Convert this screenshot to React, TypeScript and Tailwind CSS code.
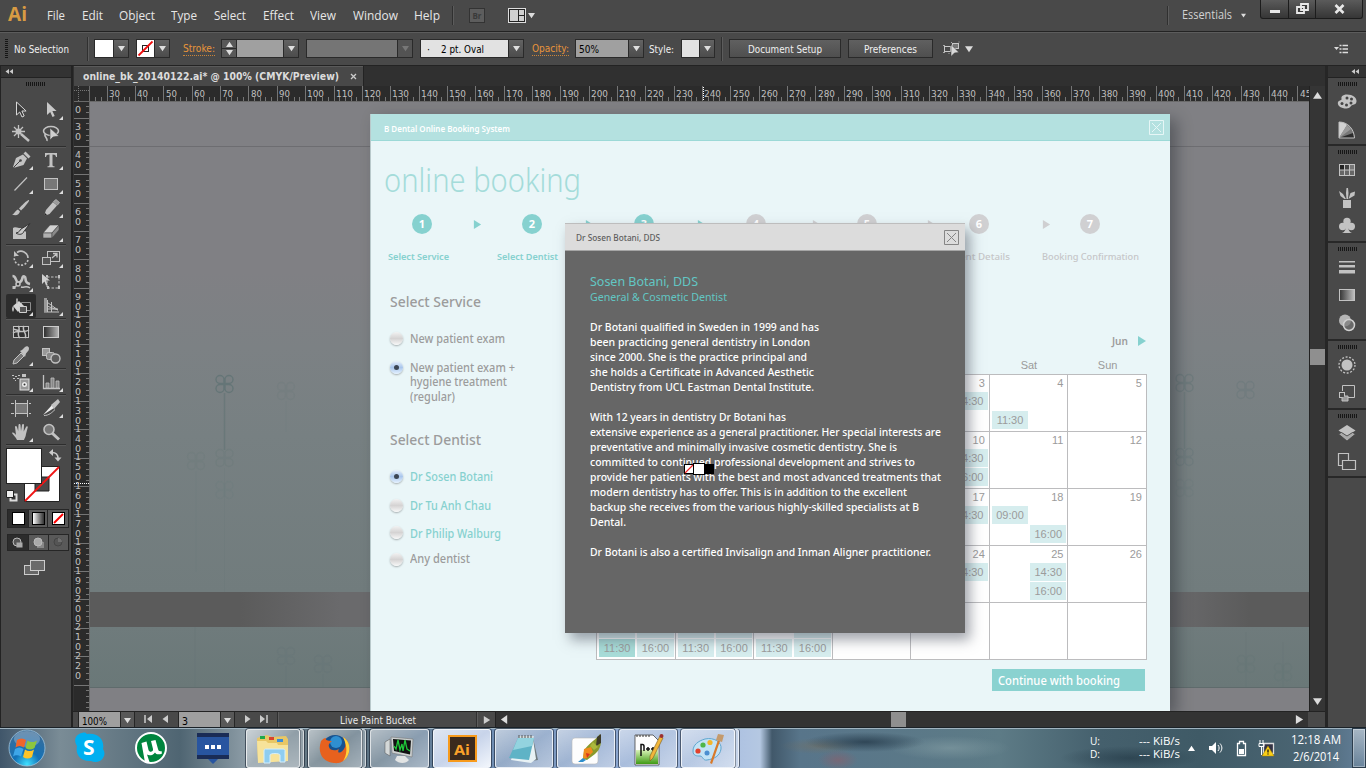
import React, { useLayoutEffect, useRef, useState } from "react";

const UI = "font-['Open_Sans','Noto_Sans',sans-serif]";
const TAHOMA = "font-['DejaVu_Sans','Noto_Sans',sans-serif]";
const MYRIAD = "font-['Noto_Sans','Open_Sans',sans-serif]";

/* One line of text condensed or widened to an exact measure. */
function Fit({ w, className = "", children }: { w: number; className?: string; children: React.ReactNode }) {
  const ref = useRef<HTMLSpanElement>(null);
  const [k, setK] = useState(1);
  useLayoutEffect(() => {
    if (ref.current) {
      ref.current.style.transform = "none";
      setK(w / ref.current.getBoundingClientRect().width);
    }
  }, [w]);
  return (
    <span className={`block shrink-0 whitespace-nowrap ${className}`} style={{ width: w }}>
      <span ref={ref} className="inline-block origin-left" style={{ transform: `scaleX(${k})` }}>
        {children}
      </span>
    </span>
  );
}

function Tri({ dir = "down", s = 7, fill = "#dcdcdc", className = "" }: { dir?: string; s?: number; fill?: string; className?: string }) {
  const pts: Record<string, string> = {
    down: "0,1.5 10,1.5 5,9",
    up: "0,8.5 10,8.5 5,1",
    right: "1,0 9,5 1,10",
    left: "8,0 1,5 8,10",
  };
  return (
    <svg width={s} height={s} viewBox="0 0 10 10" className={`shrink-0 ${className}`}>
      <polygon points={pts[dir]} fill={fill} />
    </svg>
  );
}

function Grip({ className = "" }: { className?: string }) {
  return <div className={`h-[4px] w-[19px] shrink-0 bg-[repeating-linear-gradient(90deg,#161616_0_1px,#494949_1px_2px)] ${className}`} />;
}

function Drop({ className = "", dim = false }: { className?: string; dim?: boolean }) {
  return (
    <div className={`flex h-[19px] w-[16px] shrink-0 items-center justify-center border border-[#2a2a2a] ${dim ? "bg-[#535353]" : "bg-gradient-to-b from-[#636363] to-[#4c4c4c]"} ${className}`}>
      <Tri s={7} fill={dim ? "#777" : "#dedede"} />
    </div>
  );
}

function Sep({ className = "" }: { className?: string }) {
  return <div className={`w-[2px] shrink-0 border-l border-[#303030] bg-[#5c5c5c] ${className}`} />;
}

/* ---------------------------------------------------------------- menu bar */

const menus: [string, string, number][] = [
  ["File", "ml-[20px]", 18],
  ["Edit", "ml-[17px]", 21],
  ["Object", "ml-[16px]", 36],
  ["Type", "ml-[16px]", 26],
  ["Select", "ml-[17px]", 32],
  ["Effect", "ml-[17px]", 31],
  ["View", "ml-[16px]", 26],
  ["Window", "ml-[17px]", 45],
  ["Help", "ml-[16px]", 26],
];

function MenuBar() {
  return (
    <div className={`flex h-[31px] shrink-0 items-center bg-[#494949] text-[12px] leading-[18px] text-[#e6e6e6] ${UI}`}>
      <Fit w={19} className="ml-[8px] pb-[4px] text-[20px] leading-[28px] font-bold text-[#d89b43]">Ai</Fit>
      {menus.map(([t, m, w]) => (
        <Fit key={t} w={w} className={m}>{t}</Fit>
      ))}
      <Sep className="ml-[12px] h-[19px]" />
      <div className="ml-[15px] flex h-[15px] w-[16px] items-center justify-center border border-[#333] bg-[#5d5d5d] text-[8px] font-bold text-[#3a3a3a]">Br</div>
      <svg width="18" height="16" className="ml-[23px] shrink-0">
        <rect x="0.5" y="0.5" width="17" height="14" fill="#222" stroke="#ddd" />
        <rect x="2" y="2" width="8" height="11" fill="#cfcfcf" />
        <rect x="11" y="2" width="5" height="5" fill="#cfcfcf" />
        <rect x="11" y="8" width="5" height="5" fill="#cfcfcf" />
      </svg>
      <Tri className="ml-[2px]" s={7} />
      <Sep className="ml-[632px] h-[19px]" />
      <Fit w={50} className="ml-[13px] pb-[1px] text-[#d2d2d2]">Essentials</Fit>
      <Tri className="ml-[9px]" s={5} />
      <div className="ml-[14px] flex h-[19px] w-[103px] shrink-0 self-start rounded-b-[3px] border border-t-0 border-[#1c1c1c] bg-gradient-to-b from-[#5b5b5b] to-[#363636]">
        <div className="flex w-[28px] items-center justify-center border-r border-[#1c1c1c] pt-[5px]">
          <div className="h-[3px] w-[10px] bg-[#e8e8e8]" />
        </div>
        <div className="flex w-[27px] items-center justify-center border-r border-[#1c1c1c]">
          <svg width="13" height="12">
            <path d="M5 1h7v6H5z M1 4h7v6H1z" fill="#3a3a3a" stroke="#e8e8e8" strokeWidth="1.8" />
          </svg>
        </div>
        <div className="flex flex-1 items-center justify-center">
          <svg width="11" height="10">
            <path d="M1.500 1l8 8M9.500 1l-8 8" stroke="#e8e8e8" strokeWidth="2.600" />
          </svg>
        </div>
      </div>
    </div>
  );
}

/* ------------------------------------------------------------- control bar */

function ControlBar() {
  return (
    <div className={`flex h-[35px] shrink-0 items-center border-t border-b border-[#232323] bg-[#494949] text-[10.500px] leading-[14px] text-[#f0f0f0] shadow-[inset_0_1px_0_#5c5c5c] ${TAHOMA}`}>
      <div className="ml-[5px] h-[20px] w-[3px] bg-[repeating-linear-gradient(180deg,#161616_0_1px,#494949_1px_2px)]" />
      <Fit w={55} className="ml-[6px]">No Selection</Fit>
      <Sep className="ml-[18px] h-[24px]" />
      <div className="ml-[5px] h-[19px] w-[20px] border border-[#2a2a2a] bg-white" />
      <Drop className="-ml-[1px]" />
      <svg width="19" height="19" className="ml-[7px] shrink-0">
        <rect x="0.5" y="0.5" width="18" height="18" fill="#fff" stroke="#2a2a2a" />
        <rect x="6.500" y="6.500" width="6" height="6" fill="none" stroke="#222" />
        <path d="M2.500 16.500l14-14" stroke="#f00f0f" strokeWidth="1.8" />
      </svg>
      <Drop className="-ml-[1px]" />
      <Fit w={32} className="ml-[13px] border-b border-dotted border-[#c98438] text-[#e8953b]">Stroke:</Fit>
      <div className="ml-[6px] flex h-[19px] w-[16px] shrink-0 flex-col items-center justify-between border border-[#2a2a2a] bg-[#585858] py-[1px]">
        <Tri dir="up" s={7} />
        <div className="h-px w-full bg-[#2a2a2a]" />
        <Tri s={7} />
      </div>
      <div className="-ml-[1px] h-[19px] w-[48px] border border-[#2a2a2a] bg-[#a0a0a0]" />
      <Drop className="-ml-[1px]" />
      <div className="ml-[7px] h-[19px] w-[92px] border border-[#2a2a2a] bg-[#757575]" />
      <Drop dim className="-ml-[1px]" />
      <div className="ml-[7px] flex h-[19px] w-[89px] items-center border border-[#2a2a2a] bg-[#e2e2e2] text-black">
        <Fit w={3} className="ml-[6px]">·</Fit>
        <Fit w={43} className="ml-[11px]">2 pt. Oval</Fit>
      </div>
      <Drop className="-ml-[1px]" />
      <Fit w={37} className="ml-[8px] border-b border-dotted border-[#c98438] text-[#e8953b]">Opacity:</Fit>
      <div className="ml-[6px] flex h-[19px] w-[54px] items-center border border-[#2a2a2a] bg-[#a0a0a0] text-black">
        <Fit w={20} className="ml-[3px]">50%</Fit>
      </div>
      <Drop className="-ml-[1px]" />
      <Fit w={25} className="ml-[5px]">Style:</Fit>
      <div className="ml-[7px] h-[19px] w-[19px] border border-[#2a2a2a] bg-[#e2e2e2]" />
      <Drop className="-ml-[1px]" />
      <Sep className="ml-[6px] h-[24px]" />
      <div className="ml-[6px] flex h-[19px] w-[112px] items-center justify-center border border-[#2a2a2a] bg-gradient-to-b from-[#606060] to-[#4f4f4f]">
        <Fit w={74}>Document Setup</Fit>
      </div>
      <div className="ml-[7px] flex h-[19px] w-[85px] items-center justify-center border border-[#2a2a2a] bg-gradient-to-b from-[#606060] to-[#4f4f4f]">
        <Fit w={53}>Preferences</Fit>
      </div>
      <svg width="18" height="16" className="ml-[10px] shrink-0">
        <rect x="1.500" y="5.500" width="6" height="5" fill="none" stroke="#c8c8c8" />
        <rect x="9.500" y="2.500" width="6" height="5" fill="#777" stroke="#c8c8c8" />
        <path d="M0 4.500h2M0 11.500h2M6 12v1M15.500 1h1M8 1.500h1" stroke="#aaa" />
        <path d="M8 3.500l8 8-4.500.4-3.500 3.600z" fill="#d8d8d8" stroke="#333" strokeWidth=".5" />
      </svg>
      <Tri className="ml-[4px]" s={8} />
      <svg width="14" height="10" className="ml-[361px] shrink-0">
        <polygon points="0,3 5,3 2.500,6" fill="#ddd" />
        <path d="M5.500 1.500h2M5.500 5h2M5.500 8.500h2M8.500 1.500h5.500M8.500 5h5.500M8.500 8.500h5.500" stroke="#ddd" strokeWidth="1.300" />
      </svg>
    </div>
  );
}

/* ------------------------------------------------------------------- tools */

const G = "#c2c2c2";
const tools: Record<string, React.ReactNode> = {
  select: <path d="M7.500 4v13l3.200-3 2.300 5 2.200-1-2.300-5h4.200z" fill="#3a3a3a" stroke="#d8d8d8" />,
  direct: <path d="M8 4v13l3.200-3 2.300 5 2.200-1-2.300-5h4.200z" fill="#c8c8c8" />,
  wand: (
    <g stroke={G} fill="none">
      <path d="M12 12l8 7" strokeWidth="2.400" />
      <path d="M9.500 3v13M3 9.500h13M5 5l9 9M14 5l-9 9" strokeWidth="1.300" />
      <circle cx="9.500" cy="9.500" r="3" fill={G} stroke="none" />
    </g>
  ),
  lasso: (
    <g fill="none" stroke={G} strokeWidth="1.600">
      <ellipse cx="12" cy="9" rx="7.500" ry="4.500" />
      <path d="M6 12c-1 3 3 4 2 7" />
      <path d="M11 6v12l3-3 6-1z" fill="#cfcfcf" stroke="#444" strokeWidth=".6" />
    </g>
  ),
  pen: (
    <g fill={G}>
      <path d="M4 19l3-9 7-3.500 4 4L14.500 17 6 19.500z" />
      <path d="M14.500 5.500l2-2 5 5-2 2z" />
      <path d="M5 19l6-6" stroke="#444" />
      <circle cx="11.500" cy="12.500" r="1.300" fill="#444" />
    </g>
  ),
  type: <path d="M6 5h12v4h-1c-.4-1.800-1-2.500-3.500-2.500V17c0 1 .5 1.300 2 1.300v.9h-7v-.9c1.500 0 2-.3 2-1.300V6.500C8 6.500 7.400 7.200 7 9H6z" fill={G} />,
  line: <path d="M5.500 18.500l12.500-13" stroke={G} strokeWidth="1.200" />,
  rect: <rect x="5.500" y="6.500" width="13" height="11" fill="#777" stroke={G} />,
  brush: (
    <g fill={G}>
      <path d="M20 4c1 .8-5 8-8 10.500L10 12.500C13 9 19 3.200 20 4z" />
      <path d="M9 13.500l2 2C10 19 7 20 3 18.500c2.500-.5 3-4 6-5z" />
    </g>
  ),
  pencil: (
    <g>
      <path d="M5 20l2-6L14 6l4 3.500-7.500 8.500z" fill={G} />
      <path d="M14.500 5.500L17 3.500l3.500 3L18.500 9z" fill="#999" stroke={G} strokeWidth=".7" />
      <path d="M5 20l1-3 2 2z" fill="#222" />
    </g>
  ),
  blob: (
    <g>
      <path d="M4 8c2-1.500 4 0 6 0h3l4 4v7H4z" fill={G} />
      <path d="M21 3.500L12 9c-1.500 3-4 4-5 4 3.500 2.500 7 1 7.500-1z" fill="#ccc" stroke="#333" strokeWidth="1" />
    </g>
  ),
  eraser: (
    <g stroke="#444" strokeWidth=".6">
      <path d="M4 13l7-8 9 0-7 8z" fill="#d2d2d2" />
      <path d="M4 13h9v5H4z" fill="#b0b0b0" />
      <path d="M13 13l7-8v5l-7 8z" fill="#8a8a8a" />
    </g>
  ),
  rotate: (
    <g fill="none" stroke={G} strokeWidth="1.600">
      <path d="M8 6.500A7 7 0 0 1 19 12" />
      <path d="M19 14a7 7 0 1 1-13-5" strokeDasharray="2 1.600" />
      <path d="M5 5v5h5z" fill={G} stroke="none" />
    </g>
  ),
  scale: (
    <g fill="none" stroke={G}>
      <rect x="8.500" y="5.500" width="12" height="10" />
      <rect x="3.500" y="11.500" width="8" height="7" fill="#555" />
      <path d="M13 12l4.500-4M14 7.500h4v4" strokeWidth="1.300" />
    </g>
  ),
  warp: (
    <g fill="none" stroke={G} strokeWidth="1.500">
      <path d="M3.500 6c4 0 2.500 5 5.500 6.500 3 .5 4-2 4.500-5 .8-2 3-1 3 1 0 3 1.500 5 4.500 5.500" strokeWidth="2.600" />
      <path d="M5 18l4-4 5-6" strokeWidth="1.200" />
      <circle cx="9" cy="14" r="2" fill="#444" />
      <path d="M3.500 16h3v3h-3z" fill={G} stroke="none" />
      <path d="M12 17c3 1 5-2 9 1" />
    </g>
  ),
  freexf: (
    <g>
      <path d="M8 7h12v11H8z" fill="none" stroke={G} strokeDasharray="2.500 1.500" />
      <path d="M7 5h2v2H7zM19 5h2v3h-2zM19 16h2v3h-2zM8 16h2v3H8z" fill={G} />
      <path d="M3 4v10l2.500-2.500 1.500 4 1.500-1-1.500-4h4z" fill="#cfcfcf" />
    </g>
  ),
  bucket: (
    <g>
      <path d="M12.500 8.500h9v8h-9z" fill="none" stroke="#8d8d8d" />
      <path d="M4 12l6-5 5 5-6 6z" fill="#d4d4d4" />
      <path d="M8 10V4.500" stroke={G} strokeWidth="1.500" />
      <path d="M4 12c-1 2-1 4 0 6 1-2 1-4 0-6z" fill="#eee" />
      <path d="M10.500 12.500h7v6h-7z" fill="#555" stroke="#d0d0d0" />
    </g>
  ),
  persp: (
    <g stroke={G} fill="none">
      <path d="M5.500 4v14M8.500 6v12M12.500 8v10M5 6l14 10M5 11l14 5M5 18h15M9 15h10" />
      <path d="M5 4h3v14H5z" fill="#999" stroke="none" />
    </g>
  ),
  mesh: (
    <g stroke={G} fill="none">
      <rect x="4.500" y="6.500" width="15" height="11" fill="#333" />
      <path d="M4 13c5-4 10 1 16-3M9 6c4 3-3 8 2 12M15 6c-3 4 4 8 1 12M4 9l7 2" strokeWidth="1.500" />
    </g>
  ),
  gradient: <rect x="4.500" y="6.500" width="15" height="11" fill="url(#lr)" stroke="#ccc" />,
  dropper: (
    <g>
      <path d="M4 20l1-4 7-7 3 3-7 7z" fill="#777" stroke={G} />
      <path d="M11 7l2-1 3-3c3-2 5 1 3.500 3.500L17 9.500 16 13z" fill={G} />
    </g>
  ),
  blend: (
    <g stroke={G}>
      <rect x="3.500" y="4.500" width="7" height="7" fill="#999" />
      <rect x="7.500" y="8.500" width="8" height="7" rx="2" fill="#888" />
      <circle cx="16.500" cy="14.500" r="4.500" fill="#5c5c5c" strokeWidth="1.400" />
    </g>
  ),
  spray: (
    <g>
      <path d="M3 5h2v1H3zM6 6h2v1H6zM9 5h2v1H9zM4 8h2v1H4zM8 8h2v1H8zM6 10h1v1H6z" fill={G} />
      <path d="M13 4h4v3h-4z" fill={G} />
      <rect x="11" y="9" width="9" height="11" fill="#999" stroke="#ddd" />
      <circle cx="15.500" cy="14.500" r="2.500" fill="#eee" />
      <circle cx="15.500" cy="14.500" r="1" fill="#333" />
    </g>
  ),
  graph: (
    <g>
      <path d="M4.500 5v13.500H21" fill="none" stroke={G} strokeWidth="1.300" />
      <path d="M7 13h3v5H7zM12 8h3v10h-3zM17 11h3v7h-3z" fill="#888" stroke={G} strokeWidth=".8" />
    </g>
  ),
  artboard: (
    <g stroke={G} fill="none">
      <path d="M6.500 4v17M18.500 4v17M2 7.500h3M20 7.500h2M2 17.500h3M20 17.500h2" />
      <rect x="6.500" y="7.500" width="12" height="10" fill="#777" />
    </g>
  ),
  slice: (
    <g>
      <path d="M4 19l9-10 2 3z" fill="#eee" />
      <path d="M12 9l7-6 2 3-6 7z" fill={G} />
      <path d="M5 19.500c5 0 8-3 11-6" stroke={G} fill="none" />
    </g>
  ),
  hand: (
    <path d="M8 20c-1-3-4-5-5-7 1-1 2.500 0 4 2L6 7c0-1.500 1.600-1.500 2 0l1.200 4L9.500 5c0-1.500 2-1.500 2 0l.5 6 1-6c.3-1.400 2-1 2 0l-.3 6.500L17 7c.6-1.300 2-.7 1.700.5L17 14c-.3 3-1.500 4.500-2 6z" fill={G} />
  ),
  zoom: (
    <g>
      <path d="M13 13l7 6.500" stroke={G} strokeWidth="3" />
      <circle cx="10" cy="9.500" r="5" fill="#777" stroke={G} strokeWidth="1.600" />
    </g>
  ),
};

const toolRows: string[][][] = [
  [["select", "direct+"], ["wand", "lasso"]],
  [["pen+", "type+"], ["line+", "rect+"], ["brush", "pencil+"], ["blob", "eraser+"]],
  [["rotate+", "scale+"], ["warp+", "freexf"], ["bucket+", "persp+"]],
  [["mesh", "gradient"], ["dropper+", "blend"]],
  [["spray+", "graph+"]],
  [["artboard", "slice+"], ["hand+", "zoom"]],
];

function ToolIcon({ name }: { name: string }) {
  const sub = name.endsWith("+");
  const key = name.replace("+", "");
  return (
    <div className={`flex h-[24px] w-[30px] items-center justify-center ${key === "bucket" ? "rounded-[2px] bg-[#2c2c2c]" : ""}`}>
      <svg width="30" height="24" viewBox="-3 0 30 24">
        {tools[key]}
        {sub && <polygon points="24,18 24,22 20,22" fill="#ddd" />}
      </svg>
    </div>
  );
}

function ToolPanel() {
  return (
    <div className="flex w-[73px] shrink-0 flex-col border-r-2 border-l border-[#232323] bg-[#494949]">
      <div className="flex h-[12px] items-center border-b border-[#222] bg-[#333] pl-[4px]">
        <Tri dir="left" s={5} fill="#ccc" />
        <Tri dir="left" s={5} fill="#ccc" className="-ml-[1px]" />
      </div>
      <Grip className="mt-[4px] ml-[25px]" />
      <div className="mt-[12px] flex flex-col pl-[5px]">
        {toolRows.map((g, i) => (
          <React.Fragment key={i}>
            {g.map((r, j) => (
              <div key={j} className="flex">
                {r.map((n) => (
                  <ToolIcon key={n} name={n} />
                ))}
              </div>
            ))}
            <div className="h-[2px] w-[60px] border-t border-[#2e2e2e] bg-[#585858]" />
          </React.Fragment>
        ))}
      </div>
      <svg width="70" height="60" className="shrink-0">
        <path d="M23.500 20.500h35v35h-35zM34 31v14h14V31z" fill="#fff" fillRule="evenodd" stroke="#222" />
        <path d="M24 55l34-34" stroke="#f01414" strokeWidth="1.800" />
        <rect x="5.500" y="2.500" width="35" height="35" fill="#fff" stroke="#222" />
        <path d="M51 6.500c4 0 6 2 6 6" fill="none" stroke="#ccc" strokeWidth="1.400" />
        <path d="M52 3v7l-4-3.500zM53.500 11.500h7l-3.500 4z" fill="#ccc" />
        <path d="M9.500 48.500h6v6h-6z" fill="#333" stroke="#ddd" strokeWidth="2" />
        <path d="M5.500 44.500h7v7h-7z" fill="#eee" stroke="#222" />
      </svg>
      <div className="mt-[3px] ml-[6px] flex h-[19px] w-[62px] shrink-0 border border-[#262626]">
        <div className="flex w-[20px] items-center justify-center bg-[#2c2c2c]">
          <div className="h-[13px] w-[13px] border border-black bg-white" />
        </div>
        <div className="flex w-[20px] items-center justify-center border-r border-l border-[#262626] bg-[#5a5a5a]">
          <div className="h-[13px] w-[13px] border border-black bg-gradient-to-r from-white to-[#333]" />
        </div>
        <div className="flex w-[20px] items-center justify-center bg-[#5a5a5a]">
          <svg width="13" height="13">
            <rect x=".5" y=".5" width="12" height="12" fill="#fff" stroke="#000" />
            <path d="M2 11l9-9" stroke="#f00" strokeWidth="2" />
          </svg>
        </div>
      </div>
      <div className="mt-[6px] ml-[6px] flex h-[17px] w-[62px] shrink-0 border border-[#262626]">
        {[0, 1, 2].map((i) => (
          <div key={i} className={`flex w-[20px] items-center justify-center ${i === 0 ? "bg-[#2c2c2c]" : "border-l border-[#262626] bg-[#595959]"}`}>
            <svg width="14" height="12">
              {i === 1 && <rect x="5" y="5" width="7" height="6" fill="#888" />}
              <circle cx="6" cy="5" r="4" fill={i === 1 ? "#aaa" : "#555"} stroke={i === 2 ? "#444" : "#bbb"} />
              {i === 0 && <rect x="5.500" y="5.500" width="6" height="5" fill="#aaa" />}
              {i === 2 && <path d="M6 5V1a4 4 0 0 1 4 4z" fill="#6f6f6f" />}
            </svg>
          </div>
        ))}
      </div>
      <svg width="24" height="18" className="mt-[8px] ml-[22px] shrink-0">
        <rect x="1.500" y="6.500" width="14" height="9" fill="#666" stroke="#ccc" />
        <rect x="7.500" y="1.500" width="14" height="10" fill="#6a6a6a" stroke="#ccc" />
      </svg>
    </div>
  );
}

/* ------------------------------------------------------------------ rulers */

const hMarks = Array.from({ length: 43 }, (_, i) => 30 + i * 10);
const vMarks = Array.from({ length: 20 }, (_, i) => 30 + i * 10);

function HRuler() {
  return (
    <div className={`relative h-[16px] w-[1235px] overflow-hidden border-b border-[#6a6a6a] bg-[#2b2b2b] text-[9.500px] leading-[12px] text-[#c0c0c0] ${TAHOMA}`}>
      <svg width="1235" height="15" className="absolute inset-0">
        {Array.from({ length: 216 }, (_, i) => {
          const x = Math.round(32.700 + (i - 5) * 5.670);
          return i > 2 && <path key={i} d={`M${x + 0.5} ${i % 5 === 0 ? 0 : 11}V15`} stroke="#757575" />;
        })}
        <path d="M629.500 1V15" stroke="#fff" strokeDasharray="1 1" />
        <path d="M0 4.500H15M4.500 0V15" stroke="#777" strokeDasharray="1 1" />
        <path d="M15.500 0V15" stroke="#6a6a6a" />
      </svg>
      {hMarks.map((m, i) => (
        <span key={m} className="absolute top-[2px]" style={{ left: Math.round(34.800 + i * 28.350) }}>
          <Fit w={m > 99 ? 17 : 11}>{m}</Fit>
        </span>
      ))}
    </div>
  );
}

function VRuler() {
  return (
    <div className={`relative w-[16px] shrink-0 overflow-hidden border-r border-[#6a6a6a] bg-[#2b2b2b] text-[9.500px] leading-[10px] text-[#c0c0c0] ${TAHOMA}`}>
      <svg width="15" height="609" className="absolute inset-0">
        {Array.from({ length: 109 }, (_, i) => {
          const y = Math.round(15.500 + (i - 2) * 5.670);
          return <path key={i} d={`M${(i - 2) % 5 === 0 ? 0 : 12} ${y + 0.5}H15`} stroke="#757575" />;
        })}
        <path d="M0 381.500H15" stroke="#fff" strokeDasharray="1 1" />
      </svg>
      <span className="absolute top-[3px] left-[1px]">0</span>
      {vMarks.map((m, i) => (
        <span key={m} className="absolute left-[1px] flex flex-col" style={{ top: Math.round((m > 99 ? 10 : 20) + i * 28.350) }}>
          {String(m).split("").map((d, j) => (
            <span key={j}>{d}</span>
          ))}
        </span>
      ))}
    </div>
  );
}

/* ------------------------------------------------------------ booking page */

function Radio({ on = false, className = "" }: { on?: boolean; className?: string }) {
  return (
    <div className={`flex h-[13px] w-[13px] shrink-0 items-center justify-center rounded-full shadow-[0_1px_2px_rgba(0,0,0,0.3)] ${on ? "bg-gradient-to-b from-[#e9f1fb] via-[#a9c6ec] to-[#e6f2ff]" : "bg-gradient-to-b from-[#f2f2f2] via-[#d5d3d3] to-[#f8f8f8]"} ${className}`}>
      {on && <div className="h-[5px] w-[5px] rounded-full bg-[#3c4654]" />}
    </div>
  );
}

function CloseBox({ stroke }: { stroke: string }) {
  return (
    <svg width="15" height="15" className="shrink-0">
      <path d="M.5 .5h14v14H.5zM3 3l9 9M12 3l-9 9" fill="none" stroke={stroke} />
    </svg>
  );
}

const steps: [string, string][] = [
  ["ml-[41px]", ""],
  ["ml-[41px]", "ml-[41px]"],
  ["ml-[41px]", "ml-[43px]"],
  ["ml-[41px]", "ml-[43px]"],
  ["ml-[37px]", "ml-[46px]"],
  ["ml-[34px]", "ml-[50px]"],
  ["ml-[30px]", "ml-[53px]"],
];

/* Slots are listed left/right, upper row first; "" is a filled slot without a label. */
const slots: Record<string, (string | null)[]> = {
  "0-4": [null, "14:30", null, null],
  "0-5": [null, null, "11:30", null],
  "1-4": [null, "14:30", null, "16:00"],
  "2-4": [null, "14:30", null, null],
  "2-5": ["09:00", null, null, "16:00"],
  "3-4": [null, "14:30", null, null],
  "3-5": [null, "14:30", null, "16:00"],
  "4-0": ["", "", "11:30", "16:00"],
  "4-1": ["", "", "11:30", "16:00"],
  "4-2": [null, "", "11:30", "16:00"],
};

function Calendar() {
  return (
    <div className="w-[551px] font-['Liberation_Sans',Arial,sans-serif] text-[11px] text-[#9b9b9b]">
      <div className="grid h-[17px] grid-cols-7 text-center leading-[16px]">
        <span className="col-start-6">Sat</span>
        <span>Sun</span>
      </div>
      <div className="grid grid-cols-7 border-t border-l border-[#bcbcbe] bg-white">
        {Array.from({ length: 35 }, (_, i) => {
          const r = Math.floor(i / 7);
          const c = i % 7;
          const s = slots[`${r}-${c}`] || [];
          return (
            <div key={i} className="h-[57px] border-r border-b border-[#bcbcbe] pl-[2px]">
              <div className="h-[17px] pr-[4px] text-right leading-[17px]">{c > 3 && r < 4 ? i - 1 : ""}</div>
              <div className="grid grid-cols-2 gap-x-[2px] gap-y-[1px] pr-[1px]">
                {[0, 1, 2, 3].map((k) => (
                  <div key={k} className={`h-[18px] text-center leading-[19px] ${s[k] != null ? (r === 4 && c === 0 && k === 2 ? "bg-[#a8dcd8]" : "bg-[#d6edee]") : ""}`}>
                    {s[k]}
                  </div>
                ))}
              </div>
            </div>
          );
        })}
      </div>
    </div>
  );
}

function Choice({ on, w, label, className = "", tone = "text-[#9c9c9c]", dot = "-mt-[2px]" }: { on?: boolean; w: number; label: string; className?: string; tone?: string; dot?: string }) {
  return (
    <div className={`flex h-[16px] items-center ${className}`}>
      <Radio on={on} className={dot} />
      <Fit w={w} className={`ml-[7px] text-[12px] leading-[16px] font-medium ${tone}`}>{label}</Fit>
    </div>
  );
}

function BookingPage() {
  return (
    <div className={`absolute top-[12px] left-[280px] flex h-[597px] w-[800px] flex-col border-l border-[#b9c9cb] bg-[#eaf6f8] shadow-[7px_5px_14px_rgba(40,45,50,0.45)] ${MYRIAD}`}>
      <div className="flex h-[27px] shrink-0 items-center justify-between border-b border-[#9cd9d7] bg-[#b4e1e0] pr-[6px] pl-[13px]">
        <Fit w={126} className="pt-[4px] text-[9px] leading-[12px] font-semibold text-white">B Dental Online Booking System</Fit>
        <CloseBox stroke="#e6f6f6" />
      </div>
      <Fit w={197} className="mt-[14px] ml-[13px] text-[33px] leading-[50px] font-light text-[#a4dcda]">online booking</Fit>
      <div className="mt-[9px] flex h-[20px] items-center">
        {steps.map(([m, a], i) => (
          <React.Fragment key={i}>
            {a && <Tri dir="right" s={9} fill={i < 4 ? "#86d1cf" : "#cfcfd1"} className={`-mr-[1px] ${a}`} />}
            <div className={`flex h-[20px] w-[20px] shrink-0 items-center justify-center rounded-full text-[11px] leading-[12px] font-bold text-white ${m} ${i < 3 ? "bg-[#86d1cf]" : "bg-[#d0d0d2]"}`}>
              {i + 1}
            </div>
          </React.Fragment>
        ))}
      </div>
      <div className="mt-[15px] flex h-[15px] text-[9.500px] leading-[15px] font-semibold text-[#86d1cf]">
        <Fit w={61} className="ml-[17px]">Select Service</Fit>
        <Fit w={61} className="ml-[48px]">Select Dentist</Fit>
        <Fit w={68} className="ml-[384px] font-medium text-[#c6c6c8]">Patient Details</Fit>
        <Fit w={97} className="ml-[32px] font-medium text-[#c6c6c8]">Booking Confirmation</Fit>
      </div>
      <div className="flex">
        <div className="w-[225px] shrink-0 pl-[19px]">
          <Fit w={91} className="mt-[28px] text-[14px] leading-[20px] font-medium text-[#9c9c9c]">Select Service</Fit>
          <Choice w={95} label="New patient exam" className="mt-[19px]" />
          <Choice on w={105} label="New patient exam +" className="mt-[13px]" />
          <div className="-mt-[1px] ml-[20px] text-[12px] leading-[14.500px] font-medium text-[#9c9c9c]">
            <Fit w={97}>hygiene treatment</Fit>
            <Fit w={45}>(regular)</Fit>
          </div>
          <Fit w={91} className="mt-[26px] text-[14px] leading-[20px] font-medium text-[#9c9c9c]">Select Dentist</Fit>
          <Choice on w={83} label="Dr Sosen Botani" tone="text-[#86d1cf]" className="mt-[19px]" />
          <Choice w={81} label="Dr Tu Anh Chau" tone="text-[#86d1cf]" className="mt-[13px]" />
          <Choice w={91} label="Dr Philip Walburg" tone="text-[#86d1cf]" className="mt-[12px]" dot="-mt-[3px]" />
          <Choice w={60} label="Any dentist" className="mt-[9px]" dot="mt-[1px]" />
        </div>
        <div className="flex w-[551px] flex-col">
          <div className="mt-[70px] flex items-center justify-end text-[10px] leading-[14px] font-semibold text-[#9c9c9c]">
            <Fit w={16}>Jun</Fit>
            <Tri dir="right" s={10} fill="#86d1cf" className="ml-[9px]" />
          </div>
          <div className="mt-[9px]">
            <Calendar />
          </div>
          <div className="mt-[9px] mr-[2px] flex h-[22px] w-[153px] items-center self-end bg-[#8ad2d0] pl-[6px]">
            <Fit w={122} className="pt-[1px] text-[12px] leading-[18px] font-medium text-white">Continue with booking</Fit>
          </div>
        </div>
      </div>
    </div>
  );
}

const bio: [string, number][][] = [
  [
    ["Dr Botani qualified in Sweden in 1999 and has", 229],
    ["been practicing general dentistry in London", 220],
    ["since 2000. She is the practice principal and", 217],
    ["she holds a Certificate in Advanced Aesthetic", 224],
    ["Dentistry from UCL Eastman Dental Institute.", 224],
  ],
  [
    ["With 12 years in dentistry Dr Botani has", 196],
    ["extensive experience as a general practitioner. Her special interests are", 351],
    ["preventative and minimally invasive cosmetic dentistry. She is", 307],
    ["committed to continued professional development and strives to", 325],
    ["provide her patients with the best and most advanced treatments that", 351],
    ["modern dentistry has to offer. This is in addition to the excellent", 317],
    ["backup she receives from the various highly-skilled specialists at B", 329],
    ["Dental.", 36],
  ],
  [["Dr Botani is also a certified Invisalign and Inman Aligner practitioner.", 341]],
];

function BioModal() {
  return (
    <div className={`absolute top-[121px] left-[475px] flex h-[410px] w-[400px] flex-col bg-[#666] shadow-[5px_7px_12px_rgba(70,75,90,0.5)] ${MYRIAD}`}>
      <div className="flex h-[28px] shrink-0 items-center justify-between border-t border-b border-t-[#bdbdbd] border-b-[#a5a5a5] bg-[#dcdcdc] pr-[6px] pl-[11px]">
        <Fit w={84} className="pt-[2px] text-[9px] leading-[12px] font-medium text-[#5e5e5e]">Dr Sosen Botani, DDS</Fit>
        <CloseBox stroke="#858585" />
      </div>
      <div className="pl-[24.500px]">
        <Fit w={108} className="mt-[21px] text-[13px] leading-[18px] text-[#62c6c4]">Sosen Botani, DDS</Fit>
        <Fit w={137} className="text-[11.500px] leading-[14px] text-[#62c6c4]">General &amp; Cosmetic Dentist</Fit>
        <div className="mt-[15px] flex flex-col gap-[15px] text-[11.500px] leading-[15px] font-medium text-white">
          {bio.map((p, i) => (
            <div key={i}>
              {p.map(([t, w]) => (
                <Fit key={t} w={w}>{t}</Fit>
              ))}
            </div>
          ))}
        </div>
      </div>
    </div>
  );
}

function Quatrefoil({ x, y, o = 1 }: { x: number; y: number; o?: number }) {
  return (
    <g opacity={o} fill="none" stroke="#5d7172" strokeWidth="1.400">
      <path d={`M${x - 0.500} ${y - 0.500}h-4a4 4 0 1 1 4-4zM${x + 0.500} ${y - 0.500}v-4a4 4 0 1 1 4 4zM${x - 0.500} ${y + 0.500}v4a4 4 0 1 1-4-4zM${x + 0.500} ${y + 0.500}h4a4 4 0 1 1-4 4z`} />
    </g>
  );
}

function Canvas() {
  return (
    <div className="relative h-[609px] w-[1219px] shrink-0 overflow-hidden bg-[#808084]">
      <div className="flex h-full flex-col">
        <div className="h-[45px] shrink-0 border-b border-[#6d6d71]" />
        <div className="h-[445px] shrink-0 bg-[linear-gradient(180deg,#808084_0%,#808084_28%,#7c8184_45%,#778082_65%,#717c7d_100%)]" />
        <div className="h-[35px] shrink-0 bg-[linear-gradient(90deg,#5b5b5b_0,#5b5b5b_150px,#6a6a6c_250px,#6a6a6c_1080px,#5b5b5b_1160px)]" />
        <div className="h-[61px] shrink-0 border-b border-[#5f6b6c] bg-gradient-to-b from-[#6f7b7c] to-[#6a7878]" />
      </div>
      <svg width="1219" height="609" className="absolute inset-0">
        <Quatrefoil x={134.500} y={282} o={0.7} />
        <Quatrefoil x={196} y={289} o={0.15} />
        <Quatrefoil x={134.500} y={356} o={0.2} />
        <Quatrefoil x={134.500} y={388} o={0.1} />
        <Quatrefoil x={106} y={359} o={0.15} />
        <path d="M134.500 291V348" stroke="#5d7172" strokeWidth="1.500" opacity=".5" />
        <path d="M134.500 366V490M106 369V470M196 299V330" stroke="#5d7172" opacity=".12" />
        <Quatrefoil x={1094.500} y={281} o={0.4} />
        <Quatrefoil x={1155.500} y={288} o={0.25} />
        <Quatrefoil x={1094.500} y={355} o={0.25} />
        <Quatrefoil x={1094.500} y={386} o={0.12} />
        <path d="M1094.500 290V347" stroke="#5d7172" strokeWidth="1.500" opacity=".35" />
        <Quatrefoil x={196} y={554} o={0.18} />
        <Quatrefoil x={233} y={562} o={0.18} />
        <path d="M196 564V585M233 572V585M105 525V585" stroke="#5d7172" opacity=".2" />
        <Quatrefoil x={1156} y={562} o={0.2} />
        <Quatrefoil x={1193} y={570} o={0.2} />
        <path d="M1156 530V585M1193 540V585" stroke="#5d7172" opacity=".2" />
      </svg>
      <BookingPage />
      <BioModal />
      <svg width="32" height="14" className="absolute top-[361px] left-[593px]">
        <rect x="1.500" y="1.500" width="9" height="9" fill="#fff" stroke="#000" />
        <path d="M2 10l8-8" stroke="#e22" strokeWidth="1.100" />
        <rect x="21" y="1" width="10" height="10" fill="#000" />
        <rect x="10.500" y=".5" width="11" height="11" fill="#fff" stroke="#000" />
      </svg>
    </div>
  );
}

/* --------------------------------------------------------------- status bar */

function StatusBar() {
  return (
    <div className={`flex h-[16px] w-[1252px] shrink-0 border-t border-[#232323] bg-[#494949] text-[10.500px] leading-[16px] text-[#e8e8e8] ${TAHOMA}`}>
      <div className="ml-[5px] w-[42px] border-l border-[#262626] bg-[#9f9f9f] pt-[1px] pl-[3px] text-black">
        <Fit w={25}>100%</Fit>
      </div>
      <div className="flex w-[15px] items-center justify-center border-r border-l border-[#262626] bg-[#585858] pt-[1px]"><Tri s={7} /></div>
      <svg width="43" height="15" className="shrink-0">
        <path d="M10 3v8" stroke="#ccc" strokeWidth="1.500" />
        <polygon points="17,3 17,11 12,7" fill="#ccc" />
        <polygon points="33,3 33,11 27.500,7" fill="#ccc" />
      </svg>
      <div className="w-[42px] border-l border-[#262626] bg-[#9f9f9f] pt-[1px] pl-[3px] text-black">
        <Fit w={6}>3</Fit>
      </div>
      <div className="flex w-[15px] items-center justify-center border-r border-l border-[#262626] bg-[#585858] pt-[1px]"><Tri s={7} /></div>
      <svg width="42" height="15" className="shrink-0">
        <polygon points="10,3 10,11 15.500,7" fill="#ccc" />
        <polygon points="25,3 25,11 30,7" fill="#ccc" />
        <path d="M32 3v8" stroke="#ccc" strokeWidth="1.500" />
      </svg>
      <Sep className="h-full" />
      <Fit w={76} className="ml-[61px]">Live Paint Bucket</Fit>
      <Sep className="ml-[60px] h-full" />
      <div className="flex w-[17px] items-center justify-center"><Tri dir="right" s={8} fill="#ccc" /></div>
      <div className="flex w-[813px] shrink-0 items-center border-l border-[#222] bg-[#333]">
        <Tri dir="left" s={9} className="ml-[4px]" />
        <div className="ml-[382px] h-[15px] w-[15px] bg-[#8f8f8f]" />
        <Tri dir="right" s={9} className="ml-[389px]" />
      </div>
    </div>
  );
}

/* --------------------------------------------------------------- right dock */

const dockIcons: Record<string, React.ReactNode> = {
  palette: (
    <g>
      <path d="M10 2.500c6 0 9.500 3 9.500 6.500 0 3-2 3.500-4 4s-2 3.500-6 3.500C4 16.500.8 14 .8 11c0-2 2-2.500 3.200-3 1.500-.8-.5-2 1-3.800C6 3 8 2.500 10 2.500z" fill={G} />
      <g fill="#444"><circle cx="10" cy="6" r="1.500" /><circle cx="14.500" cy="7" r="1.500" /><circle cx="14" cy="11" r="1.500" /><circle cx="9.500" cy="13" r="1.500" /><circle cx="5" cy="11.500" r="1.500" /></g>
    </g>
  ),
  guide: (
    <g>
      <path d="M2 2c9 0 15 7 15.500 16H2z" fill="#777" />
      <path d="M2 2c4 0 6 1 8 3L2 18z" fill="#d2d2d2" />
      <path d="M10 5l4 4L2 18z" fill="#999" /><path d="M16 13l1.500 5H2z" fill="#2c2c2c" />
      <path d="M2 2c9 0 15 7 15.500 16H2z" fill="none" stroke={G} />
    </g>
  ),
  swatches: (
    <g>
      <path d="M2 4h16v12H2z" fill="#c2c2c2" />
      <path d="M3 5h4v4.500H3z" fill="#222" /><path d="M8 5h4v4.500H8z" fill="#444" /><path d="M13 5h4v4.500h-4z" fill="#777" />
      <path d="M3 10.500h4V15H3zM8 10.500h4V15H8zM13 10.500h4V15h-4z" fill="#666" />
    </g>
  ),
  brushes: (
    <g fill={G}>
      <path d="M6 12h8v8H6z" />
      <path d="M7.500 11L3.500 8 2 3l4 3 3 5zM9.500 11L9 5 9.500 0h1.500l.5 5-.5 6zM11.500 11l2-6 4.500-1.500-.5 4-3.500 2z" />
    </g>
  ),
  club: (
    <g fill={G}><circle cx="10" cy="5.500" r="3.700" /><circle cx="5.700" cy="10.500" r="3.700" /><circle cx="14.300" cy="10.500" r="3.700" /><path d="M9 9h2c0 4 1 7 4 8H5c3-1 4-4 4-8z" /></g>
  ),
  stroke: <path d="M2 4h16v1.500H2zM2 8h16v2.500H2zM2 13h16v3.500H2z" fill={G} />,
  gradient: <rect x="2.500" y="4.500" width="15" height="11" fill="url(#lr2)" stroke={G} />,
  transp: (
    <g><circle cx="8" cy="7.500" r="6" fill="#b5b5b5" /><circle cx="12" cy="12" r="5.500" fill="#777" stroke="#d0d0d0" strokeWidth="1.500" fillOpacity=".7" /></g>
  ),
  appear: (
    <g><circle cx="10" cy="10" r="5.500" fill={G} /><circle cx="10" cy="10" r="8" fill="none" stroke={G} strokeWidth="1.300" strokeDasharray="2 1.600" /></g>
  ),
  styles: (
    <g fill="none" stroke={G}><path d="M5.500 8V2.500h12v12H11" /><rect x="2.500" y="9.500" width="5" height="5" /><path d="M8 13h3v5H5v-3" fill="#999" /></g>
  ),
  layers: (
    <g fill={G}><path d="M10 1l8.500 5.500L10 12 1.500 6.500z" /><path d="M1.500 10l3-1.500L10 12l5.500-3.500 3 1.500L10 17z" fill="#aaa" stroke="#444" strokeWidth=".8" /></g>
  ),
  boards: (
    <g fill="#494949" stroke={G} strokeWidth="1.200"><path d="M1.500 1.500h10v12h-10z" /><path d="M5.500 8.500h13v9h-13z" /></g>
  ),
};

const dockGroups: [string, string[]][] = [
  ["h-[68px]", ["palette", "guide"]],
  ["h-[97px]", ["swatches", "brushes", "club"]],
  ["h-[98px]", ["stroke", "gradient", "transp"]],
  ["h-[69px]", ["appear", "styles"]],
  ["h-[68px]", ["layers", "boards"]],
];

function Dock() {
  return (
    <div className="flex w-[41px] shrink-0 flex-col border-l-[3px] border-[#262626] bg-[#494949]">
      <div className="flex h-[12px] shrink-0 items-center justify-end border-b border-[#222] bg-[#333] pr-[6px]">
        <Tri dir="left" s={5} fill="#ccc" />
        <Tri dir="left" s={5} fill="#ccc" className="-ml-[1px]" />
      </div>
      {dockGroups.map(([h, icons], i) => (
        <div key={i} className={`flex shrink-0 flex-col items-center border-b-2 border-[#282828] pt-[4px] ${h}`}>
          <Grip />
          <div className="mt-[2px] flex flex-col">
            {icons.map((n) => (
              <svg key={n} width="22" height="28" viewBox="-1 -4 22 28">{dockIcons[n]}</svg>
            ))}
          </div>
        </div>
      ))}
    </div>
  );
}

function Workspace() {
  return (
    <div className="flex h-[661px] shrink-0 bg-[#333]">
      <ToolPanel />
      <div className="flex w-[1252px] shrink-0 flex-col">
        <div className={`flex h-[20px] shrink-0 bg-[#303030] text-[10.500px] leading-[20px] font-bold text-[#dcdcdc] ${TAHOMA}`}>
          <div className="ml-[1px] flex w-[290px] items-center border-r border-[#232323] bg-[#484848] shadow-[inset_0_1px_0_#5a5a5a]">
            <Fit w={256} className="ml-[9px]">online_bk_20140122.ai* @ 100% (CMYK/Preview)</Fit>
            <svg width="7" height="7" className="ml-[11px]"><path d="M1 1l5 5M6 1L1 6" stroke="#ccc" strokeWidth="1.300" /></svg>
          </div>
        </div>
        <div className="flex shrink-0">
          <div className="flex w-[1236px] flex-col">
            <div className="pl-[1px]"><HRuler /></div>
            <div className="flex h-[609px] pl-[1px]">
              <VRuler />
              <Canvas />
            </div>
          </div>
          <div className="flex w-[16px] flex-col items-center border-l border-[#222] bg-[#353535] py-[5px]">
            <Tri dir="up" s={9} />
            <div className="mt-[249px] h-[16px] w-[15px] bg-[#8f8f8f]" />
            <Tri s={9} className="mt-auto" />
          </div>
        </div>
        <StatusBar />
      </div>
      <Dock />
    </div>
  );
}

/* ----------------------------------------------------------------- taskbar */

function TaskButton({ w, stack = false, active = false, className = "", children }: { w: string; stack?: boolean; active?: boolean; className?: string; children: React.ReactNode }) {
  return (
    <div className={`flex h-[39px] shrink-0 self-end ${className}`}>
      <div className={`flex items-center justify-center rounded-[3px] border border-white/70 shadow-[0_0_0_1px_rgba(20,30,45,0.6)] ${w} ${active ? "bg-gradient-to-br from-[#dfe6f2] via-[#c8d4ea] to-[#f2f6fc]" : "bg-gradient-to-br from-white/55 via-white/25 to-white/45"}`}>
        {children}
      </div>
      {stack && <div className="w-[4px] rounded-r-[3px] border border-l-0 border-white/60 bg-white/30 shadow-[1px_0_0_rgba(20,30,45,0.6)]" />}
    </div>
  );
}

function Taskbar() {
  return (
    <div className={`flex h-[41px] shrink-0 items-center border-t border-[#1b2228] shadow-[inset_0_1px_0_#9fb3c0] bg-[radial-gradient(ellipse_60px_10px_at_865px_14px,rgba(30,50,66,0.7),transparent),radial-gradient(ellipse_60px_12px_at_950px_20px,rgba(140,165,170,0.5),transparent),radial-gradient(ellipse_20px_10px_at_838px_32px,rgba(150,90,100,0.5),transparent),radial-gradient(ellipse_40px_8px_at_820px_18px,rgba(120,110,90,0.5),transparent),radial-gradient(ellipse_70px_12px_at_1130px_30px,rgba(25,45,58,0.5),transparent),linear-gradient(90deg,#40566a_0,#7a8c96_60px,#4f6572_180px,#8b9ba5_245px,#566b78_330px,#5d7486_380px,#6d8bb0_480px,#8ba6d0_620px,#b0c4e2_745px,#b5c8e2_760px,#41586a_772px,#58758a_800px,#5d7b86_1000px,#45606d_1100px,#3f5a66_1200px,#4b6573_1310px,#64809a_1366px)] ${UI}`}>
      <svg width="38" height="38" viewBox="0 0 38 38" className="ml-[8px] shrink-0">
        <circle cx="19" cy="19" r="18" fill="url(#orb)" stroke="#9fc4dd" strokeWidth=".8" />
        <ellipse cx="19" cy="10" rx="13" ry="8" fill="#fff" opacity=".25" />
        <path d="M9 11c3-2 6-2 9 0l-2 7.500c-3-2-6-2-8.500 0z" fill="#f0652b" />
        <path d="M19.500 11.500c3 2 6 2 9.500 0l-2.500 7.500c-3 2-6 2-9 0z" fill="#8cc63e" />
        <path d="M7 20c3-2 6-2 8.500 0L13 27.500c-3-2-6-1.500-8 0z" fill="#3ea6e8" />
        <path d="M17 20.500c3 2 6 2 9 0L24 28c-3 2-6 2-9 0z" fill="#fdc428" />
      </svg>
      <svg width="32" height="32" viewBox="0 0 32 32" className="ml-[28px] shrink-0">
        <path d="M8 1c3-1 4 0 5 1 10-2 18 5 16 15 2 3 2 6 0 9-2 4-8 5-12 3C7 30 1 23 3 14-1 8 2 2 8 1z" fill="#00aff0" />
        <text x="9" y="23" fontSize="21" fontWeight="bold" fontFamily="Open Sans" fill="#fff">S</text>
      </svg>
      <svg width="34" height="34" viewBox="0 0 34 34" className="ml-[28px] shrink-0">
        <circle cx="17" cy="17" r="15" fill="#00853e" stroke="#fff" strokeWidth="2" />
        <path d="M7.500 12l5-1.500 2 8.500c1 3 5 2 4.500-1l-2-8 4.500-1 2.500 9c.5 2 1.500 2.500 3.500 2l.5 2.500c-3 1.500-6 1-7-1-2 3-6 3.500-8 2l2.500 7.500-4.500.5z" fill="#fff" />
      </svg>
      <svg width="34" height="34" viewBox="0 0 34 34" className="ml-[28px] shrink-0">
        <path d="M1 2h32v26H22l-5 5-5-5H1z" fill="#2855a0" />
        <path d="M1 2h32v4H1zM1 24h32v4H1z" fill="#1a2c56" />
        <path d="M9 14h4v4H9zM15 14h4v4h-4zM21 14h4v4h-4z" fill="#fff" />
      </svg>
      <TaskButton w="w-[54px]" stack className="ml-[16px]">
        <svg width="36" height="32" viewBox="0 0 36 32">
          <path d="M2 5l10-3 5 2 14-1 2 3v22H3z" fill="#e8c765" />
          <path d="M5 3h5v3H5z" fill="#1ea84a" /><path d="M14 4h5v3h-5z" fill="#d8432e" /><path d="M22 6h6v3h-6z" fill="#3c8dd8" />
          <path d="M2 8h9l2 2h9l1 2h10v16L3 30z" fill="#f7e39a" />
          <path d="M9 18c0-2 1-2 2-2h17c2 0 2 1 2 2v11h-5v-7c0-2-10-2-10 0v8H9z" fill="#8fcdf0" stroke="#d5effc" />
        </svg>
      </TaskButton>
      <TaskButton w="w-[54px]" stack className="ml-[4px]">
        <svg width="32" height="32" viewBox="0 0 32 32">
          <circle cx="16" cy="15" r="13" fill="#17528f" />
          <circle cx="17" cy="9" r="6" fill="#2f8fd0" />
          <path d="M2 8c2-2 3-3 5-3-1 3 3 3 6 3-2 2-4 3-3 6 1 4 7 4 10 2-3 6 4 4 6-2 1-3 0-7-2-10 6 4 7 9 6 15-2 8-8 12-15 11C4 29-2 20 2 8z" fill="#e7611e" />
          <path d="M24 4c6 4 7 9 6 15-1 4-3 7-6 9 4-6 5-14 0-24z" fill="#ffd23c" />
        </svg>
      </TaskButton>
      <TaskButton w="w-[59px]" className="ml-[4px]">
        <svg width="34" height="32" viewBox="0 0 34 32">
          <path d="M2 9l5-3v17l-5-3z" fill="#d4d8d8" stroke="#555" strokeWidth=".5" />
          <path d="M8 4l22 2-1 18-20-4z" fill="#ccd0d0" stroke="#777" strokeWidth=".6" />
          <path d="M10 6l18 1.500-1 14L11 18z" fill="#111" />
          <path d="M11 13l2 3 2-9 2 10 2-6 1 7 2-11 2 9 3 2" stroke="#1fc73a" fill="none" strokeWidth="1.300" />
          <path d="M14 23h8l4 4c-3 4-10 4-14 0z" fill="#e2e4e4" />
        </svg>
      </TaskButton>
      <TaskButton w="w-[58px]" active className="ml-[4px]">
        <div className="flex h-[27px] w-[29px] items-center justify-center border-2 border-[#f79a1c] bg-[#3b2a1d]">
          <Fit w={16} className="text-[15px] leading-[22px] font-bold text-[#f9a12a]">Ai</Fit>
        </div>
      </TaskButton>
      <TaskButton w="w-[58px]" className="ml-[4px]">
        <svg width="34" height="32" viewBox="0 0 34 32">
          <path d="M26 5l5 22-7 1z" fill="#6f7a7e" />
          <path d="M12 3h15l-1 4H11z" fill="#d5dde0" />
          <path d="M11 6h15l3 20-5 4-20-3z" fill="#e8f2f5" />
          <path d="M11 5h16l-5 22-20-2z" fill="#5fb3c6" /><path d="M11 5h16l-2 8-19 4z" fill="#93d3df" />
          <path d="M12 2v3M15 2v3M18 2v3M21 2v3M24 2v3" stroke="#555" />
        </svg>
      </TaskButton>
      <TaskButton w="w-[58px]" className="ml-[4px]">
        <svg width="32" height="32" viewBox="0 0 32 32">
          <rect x="2" y="5" width="26" height="26" rx="3" fill="#fdfdfd" stroke="#bbb" strokeWidth=".6" />
          <path d="M30 1c2 8 1 15-5 20l-8 6-4-1 1-8C17 11 25 8 30 1z" fill="#8a9a2c" />
          <path d="M27 4l4-3v9l-5 3z" fill="#3d3a28" /><path d="M23 9l5 5-4 3-4-4z" fill="#aab83c" />
          <path d="M14 16l7-2 2 5-6 6-4 1z" fill="#f08a1d" /><path d="M16 20l4 1-3 4z" fill="#d9341e" />
          <path d="M8 29l5-4 3 2-3 2z" fill="#2e8fcd" />
        </svg>
      </TaskButton>
      <TaskButton w="w-[58px]" className="ml-[4px]">
        <svg width="32" height="34" viewBox="0 0 32 34">
          <path d="M3 3h18l6 6v24H3z" fill="#fdfdfd" stroke="#444" strokeWidth=".8" />
          <path d="M4 18h22v14H4z" fill="url(#np)" />
          <path d="M5 3v2M8 3v2M11 3v2M14 3v2M17 3v2" stroke="#333" />
          <path d="M9 24V12.500h1.500c1.500 0 1.500 1 1.500 2V19M14 17h4M16 15v4M19 17h4M21 15v4" stroke="#111" strokeWidth="1.500" fill="none" />
          <path d="M28 4l3 2-10 20-3 3 0-5z" fill="#f2b63a" stroke="#7b5a1c" strokeWidth=".6" />
          <circle cx="29.500" cy="4" r="2" fill="#9c3030" />
        </svg>
      </TaskButton>
      <TaskButton w="w-[54px]" stack className="ml-[4px]">
        <svg width="34" height="32" viewBox="0 0 34 32">
          <path d="M14 6c9-2 17 3 16 10s-7 10-14 11c-4 1-4-4-7-4s-7 0-7-5C2 12 7 8 14 6z" fill="#c3e3f5" stroke="#5ea6cf" />
          <circle cx="7" cy="18" r="2.600" fill="#e2412c" /><circle cx="12" cy="12" r="2.600" fill="#4fb648" /><circle cx="19" cy="9.500" r="2.600" fill="#f3b52c" /><circle cx="16" cy="20" r="2.500" fill="#4b8fd0" />
          <path d="M27 7l2 1-8 23-2-1z" fill="#d87a2a" />
          <path d="M25 7l6 2 2-7-6-1z" fill="#c49a6c" />
        </svg>
      </TaskButton>
      <div className="ml-auto flex w-[626px] items-center justify-end text-white">
        <div className={`flex flex-col text-[10px] leading-[13.500px] ${UI}`}>
          <div className="flex"><Fit w={10}>U:</Fit><Fit w={41} className="ml-[39px]">--- KiB/s</Fit></div>
          <div className="flex"><Fit w={10}>D:</Fit><Fit w={41} className="ml-[39px]">--- KiB/s</Fit></div>
        </div>
        <Tri dir="up" s={7} fill="#fff" className="ml-[8px]" />
        <svg width="16" height="16" className="ml-[13px]">
          <path d="M1 6h3l4-4v12l-4-4H1z" fill="#fff" />
          <path d="M10 5c1.500 2 1.500 4 0 6M12 3.500c2.500 3 2.500 6 0 9" stroke="#fff" fill="none" />
        </svg>
        <svg width="11" height="17" className="ml-[12px]">
          <path d="M1.500 3.500h2v-2h4v2h2v12h-8z" fill="none" stroke="#fff" strokeWidth="1.300" />
          <path d="M3 9h5v5H3z" fill="#fff" />
        </svg>
        <svg width="17" height="18" className="ml-[11px]">
          <path d="M5.500 4.500h10v10h-10z" fill="#334" stroke="#ddd" strokeWidth="1.300" />
          <path d="M2 1v4M5 1v4M1 4.500h5v3H1zM3.500 7v9" stroke="#fff" fill="none" />
          <path d="M10 7l6 10H4z" fill="#fbd017" stroke="#a98400" strokeWidth=".5" />
          <path d="M10 10.500v3M10 14.500v1" stroke="#111" strokeWidth="1.300" />
        </svg>
        <div className="ml-[15px] flex w-[51px] flex-col items-center text-[12px] leading-[17px]">
          <Fit w={50}>12:18 AM</Fit>
          <Fit w={46}>2/6/2014</Fit>
        </div>
        <div className="ml-[11px] h-[40px] w-[14px] border border-[#2c3d4c] bg-gradient-to-b from-white/45 to-white/5 shadow-[inset_0_0_0_1px_rgba(255,255,255,0.35)]" />
      </div>
    </div>
  );
}

export default function App() {
  return (
    <div className="flex h-[768px] w-[1366px] flex-col overflow-hidden bg-[#494949]">
      <svg width="0" height="0" className="absolute">
        <defs>
          <linearGradient id="lr"><stop offset="0" stopColor="#2a2a2a" /><stop offset="1" stopColor="#b5b5b5" /></linearGradient>
          <linearGradient id="lr2"><stop offset="0" stopColor="#333" /><stop offset="1" stopColor="#c2c2c2" /></linearGradient>
          <linearGradient id="np" x2="0" y2="1"><stop offset="0" stopColor="#d9f3b8" /><stop offset="1" stopColor="#3f9a14" /></linearGradient>
          <radialGradient id="orb" cx=".5" cy=".95" r=".9">
            <stop offset="0" stopColor="#3fe0ff" /><stop offset=".4" stopColor="#1272b8" /><stop offset="1" stopColor="#3b6c98" />
          </radialGradient>
        </defs>
      </svg>
      <MenuBar />
      <ControlBar />
      <Workspace />
      <Taskbar />
    </div>
  );
}
